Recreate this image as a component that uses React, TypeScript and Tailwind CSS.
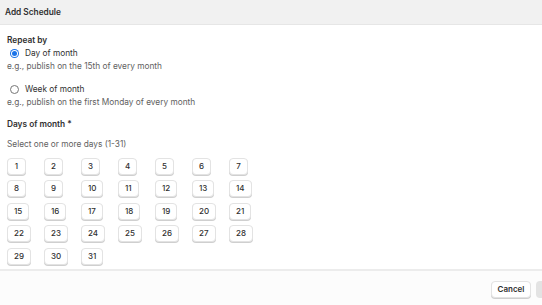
import React from 'react';

const days = Array.from({ length: 31 }, (_, i) => i + 1);

function Radio({ checked, label }: { checked: boolean; label: string }) {
  return (
    <label className="flex items-center gap-[6px] pl-[3px] h-[13px]">
      {checked ? (
        <span className="w-[9px] h-[9px] rounded-full bg-[#1a73e8] flex items-center justify-center">
          <span className="w-[7px] h-[7px] rounded-full bg-white flex items-center justify-center">
            <span className="w-[5px] h-[5px] rounded-full bg-[#1a73e8]" />
          </span>
        </span>
      ) : (
        <span className="w-[9px] h-[9px] rounded-full border border-[#767676] bg-white" />
      )}
      <span className="text-[#303030]">{label}</span>
    </label>
  );
}

export default function App() {
  return (
    <div
      className="w-[542px] h-[305px] overflow-hidden bg-white text-[8.3px] leading-[13px] flex flex-col"
      style={{ fontFamily: 'Inter, "Noto Sans", sans-serif' }}
    >
      <div className="h-[25px] shrink-0 bg-[#f1f1f1] border-b border-[#e6e6e6] flex items-center px-[5px]">
        <span className="font-semibold text-[#303030]">Add Schedule</span>
      </div>

      <div className="flex-1 pl-[7px] pt-[8.5px]">
        <div className="font-semibold text-[#303030]">Repeat by</div>
        <Radio checked label="Day of month" />
        <div className="text-[#616161]">e.g., publish on the 15th of every month</div>
        <div className="mt-[10px]">
          <Radio checked={false} label="Week of month" />
        </div>
        <div className="text-[#616161]">e.g., publish on the first Monday of every month</div>

        <div className="mt-[9px] font-semibold text-[#303030]">Days of month *</div>
        <div className="mt-[7px] text-[#616161]">Select one or more days (1-31)</div>

        <div className="mt-[7px] grid grid-cols-[repeat(7,37px)] gap-y-[5.5px] justify-items-start">
          {days.map((d) => (
            <button
              key={d}
              className="h-[17px] min-w-[19px] px-[6px] rounded-[4px] bg-white border border-[#e3e3e3] shadow-[0_1px_0_#cfcfcf] text-[8px] font-medium text-[#303030] flex items-center justify-center"
            >
              {d}
            </button>
          ))}
        </div>
      </div>

      <div className="h-[36px] shrink-0 bg-[#fcfcfc] border-t-2 border-[#ececec] flex items-start justify-end pt-[10px] gap-[5px]">
        <button className="h-[17px] w-[40px] rounded-[4px] bg-white border border-[#e3e3e3] shadow-[0_1px_0_#cfcfcf] text-[8px] font-semibold text-[#303030]">
          Cancel
        </button>
        <button aria-label="Save" className="h-[17px] w-[40px] -mr-[34px] rounded-[4px] bg-[#e3e3e3]" />
      </div>
    </div>
  );
}
